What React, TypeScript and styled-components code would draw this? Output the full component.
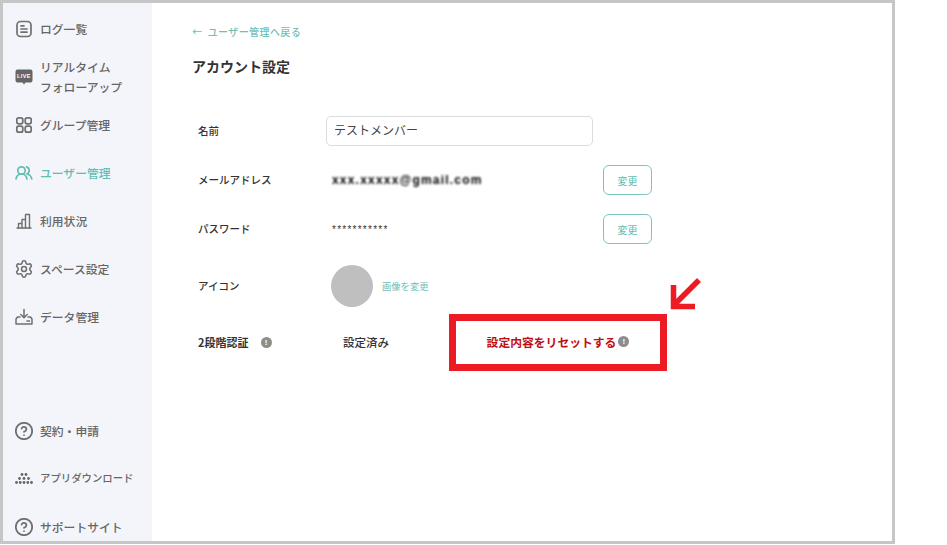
import { FC, ReactNode } from "react";
import styled, { createGlobalStyle } from "styled-components";
import { CircleHelp, Settings } from "lucide-react";

const GlobalStyle = createGlobalStyle`
  html, body {
    margin: 0;
    padding: 0;
    background: #fff;
    font-family: "Noto Sans CJK JP", "Noto Sans", sans-serif;
  }
`;

const LogIcon = () => (
  <svg width="18" height="18" viewBox="0 0 18 18" fill="none" stroke="#6f6f6f" strokeWidth="1.7" strokeLinecap="round">
    <rect x="2" y="1.500" width="14" height="15" rx="3.500" />
    <path d="M6 5.800h3M6 9h6M6 12.200h6" />
  </svg>
);

const LiveIcon = () => (
  <svg width="18" height="18" viewBox="0 0 18 18">
    <path d="M2.500 1.500h13A2 2 0 0 1 17.500 3.500v9a2 2 0 0 1-2 2h-5L9 16.500l-1.500-2h-5a2 2 0 0 1-2-2v-9a2 2 0 0 1 2-2z" fill="#666" />
    <text x="9" y="10" textAnchor="middle" fontSize="5.500" fontWeight="700" letterSpacing="0.400" fill="#fff" fontFamily="Liberation Sans, sans-serif">LIVE</text>
  </svg>
);

const GroupIcon = () => (
  <svg width="18" height="18" viewBox="0 0 18 18" fill="none" stroke="#6f6f6f" strokeWidth="1.700">
    <rect x="1.800" y="1.800" width="6" height="6" rx="2" />
    <rect x="10.200" y="1.800" width="6" height="6" rx="2" />
    <rect x="1.800" y="10.200" width="6" height="6" rx="2" />
    <rect x="10.200" y="10.200" width="6" height="6" rx="2" />
  </svg>
);

const UsersIcon = () => (
  <svg width="18" height="18" viewBox="0 0 18 18" fill="none" stroke="#62bdb2" strokeWidth="1.700" strokeLinecap="round">
    <circle cx="6.500" cy="6.500" r="3.700" />
    <path d="M1 15c.5-3 2.500-5 5.500-5s5 2 5.500 5" />
    <path d="M11.500 2.900a3.700 3.700 0 0 1 0 7.100c2.700.3 4.700 2.100 5.300 5" />
  </svg>
);

const ChartIcon = () => (
  <svg width="18" height="18" viewBox="0 0 18 18" fill="none" stroke="#6f6f6f" strokeWidth="1.400" strokeLinejoin="round" strokeLinecap="round">
    <path d="M2 16h14" />
    <path d="M3.500 16v-4.500h3.500V16M7 16V7.500h3.500V16M10.500 16V2.500h4V16" />
  </svg>
);

const TrayIcon = () => (
  <svg width="18" height="18" viewBox="0 0 18 18" fill="none" stroke="#6f6f6f" strokeWidth="1.500" strokeLinecap="round" strokeLinejoin="round">
    <path d="M9 1.500v8M5.800 6.500 9 9.700l3.200-3.200" />
    <path d="M5 9H2.500L1 11v5h16v-5l-1.500-2H13" />
    <path d="M12 13h2.500" />
  </svg>
);

const HelpIcon = () => (
  <CircleHelp size={18} strokeWidth={2.2} color="#6f6f6f" viewBox="1 1 22 22" />
);

const AppIcon = () => (
  <svg width="18" height="18" viewBox="0 0 18 18" fill="#666">
    <circle cx="7" cy="5.500" r="1.400" />
    <circle cx="11" cy="5.500" r="1.400" />
    <circle cx="4.500" cy="9.500" r="1.400" />
    <circle cx="9" cy="9.500" r="1.400" />
    <circle cx="13.500" cy="9.500" r="1.400" />
    <circle cx="1.500" cy="13.500" r="1.400" />
    <circle cx="5.200" cy="13.500" r="1.400" />
    <circle cx="9" cy="13.500" r="1.400" />
    <circle cx="12.800" cy="13.500" r="1.400" />
    <circle cx="16.500" cy="13.500" r="1.400" />
  </svg>
);

const NoteDot = styled.span`
  width: 11px;
  height: 11px;
  flex: none;
  border-radius: 50%;
  background: #8d8d8d;
  color: #fff;
  font-family: "Liberation Sans", sans-serif;
  font-size: 8px;
  font-weight: 700;
  line-height: 11px;
  text-align: center;
`;

const Frame = styled.div`
  box-sizing: border-box;
  width: 895px;
  height: 544px;
  border: 3px solid #c6c6c6;
  display: flex;
  overflow: hidden;
  background: #fff;
`;

const Sidebar = styled.nav`
  width: 149px;
  flex: none;
  padding-top: 2px;
  background: #f4f5fa;
  display: flex;
  flex-direction: column;
`;

const NavGroup = styled.div<{ $top?: number }>`
  display: flex;
  flex-direction: column;
  flex: none;
  margin-top: ${(p) => p.$top ?? 0}px;
`;

const NavItem = styled.div<{ $active?: boolean; $small?: boolean }>`
  box-sizing: border-box;
  height: 48px;
  flex: none;
  display: flex;
  align-items: center;
  gap: 7px;
  padding: 0 0 ${(p) => (p.$small ? 2 : 0)}px 12px;
  font-size: ${(p) => (p.$small ? 10.4 : 11.8)}px;
  font-weight: 500;
  line-height: 20px;
  color: ${(p) => (p.$active ? "#62bdb2" : "#666")};
  svg {
    flex: none;
  }
`;

const Main = styled.main`
  flex: 1;
  padding: 21px 0 0 40px;
`;

const BackLink = styled.a`
  display: block;
  font-size: 10px;
  line-height: 16px;
  font-weight: 500;
  letter-spacing: 0.4px;
  color: #6fc0b6;
`;

const Title = styled.h1`
  margin: 15px 0 0;
  font-size: 14px;
  line-height: 22px;
  font-weight: 700;
  color: #333;
`;

const Form = styled.div`
  margin-top: 39px;
  display: flex;
  flex-direction: column;
`;

const Row = styled.div<{ $top?: number; $height: number }>`
  display: grid;
  grid-template-columns: 128px 341px;
  align-items: center;
  height: ${(p) => p.$height}px;
  margin-top: ${(p) => p.$top ?? 0}px;
  padding-left: 6px;
`;

const Label = styled.div<{ $strong?: boolean }>`
  display: flex;
  align-items: center;
  gap: 12px;
  padding-bottom: 1px;
  font-size: ${(p) => (p.$strong ? 11 : 10.5)}px;
  font-weight: ${(p) => (p.$strong ? 700 : 500)};
  color: #333;
`;

const Value = styled.div`
  display: flex;
  align-items: center;
  font-size: 11.5px;
  color: #333;
`;

const NameInput = styled.div`
  box-sizing: border-box;
  width: 267px;
  height: 30px;
  display: flex;
  align-items: center;
  padding: 0 0 3px 7px;
  border: 1px solid #dcdcdc;
  border-radius: 5px;
  font-size: 12px;
  color: #444;
`;

const BlurredMail = styled.span`
  margin-left: 6px;
  width: 271px;
  font-family: "Liberation Sans", sans-serif;
  font-size: 12px;
  font-weight: 700;
  letter-spacing: 1.2px;
  color: #000;
  filter: blur(1px);
`;

const Masked = styled.span`
  margin-left: 6px;
  width: 271px;
  font-family: "Liberation Sans", sans-serif;
  font-size: 10px;
  letter-spacing: 1.25px;
  color: #333;
`;

const ChangeButton = styled.button`
  box-sizing: border-box;
  width: 49px;
  height: 30px;
  flex: none;
  padding: 0;
  background: #fff;
  border: 1px solid #7cc6bd;
  border-radius: 6px;
  font-family: inherit;
  font-size: 10px;
  color: #62bdb2;
`;

const Avatar = styled.div`
  width: 42px;
  height: 42px;
  margin-left: 5px;
  border-radius: 50%;
  background: #bfbfbf;
`;

const ImageLink = styled.a`
  margin-left: 9px;
  font-size: 9.300px;
  color: #6fc0b6;
`;

const DoneText = styled.span`
  width: 106px;
  margin-left: 17px;
  padding-bottom: 2px;
  flex: none;
  font-weight: 500;
`;

const Highlight = styled.div`
  position: relative;
  box-sizing: border-box;
  width: 218px;
  height: 57px;
  flex: none;
  border: 7px solid #ed1c24;
  padding-bottom: 2px;
  display: flex;
  align-items: center;
  justify-content: center;
  gap: 2px;
`;

const ResetLink = styled.span`
  font-size: 11.800px;
  font-weight: 700;
  color: #c00d12;
`;

const Arrow = styled.svg`
  position: absolute;
  left: 212px;
  top: -45px;
`;

type NavEntry = { icon: ReactNode; label: ReactNode; active?: boolean; small?: boolean };

const topItems: NavEntry[] = [
  { icon: <LogIcon />, label: "ログ一覧" },
  { icon: <LiveIcon />, label: <>リアルタイム<br />フォローアップ</> },
  { icon: <GroupIcon />, label: "グループ管理" },
  { icon: <UsersIcon />, label: "ユーザー管理", active: true },
  { icon: <ChartIcon />, label: "利用状況" },
  { icon: <Settings size={18} strokeWidth={1.9} color="#6f6f6f" viewBox="1 1 22 22" />, label: "スペース設定" },
  { icon: <TrayIcon />, label: "データ管理" },
];

const bottomItems: NavEntry[] = [
  { icon: <HelpIcon />, label: "契約・申請" },
  { icon: <AppIcon />, label: "アプリダウンロード", small: true },
  { icon: <HelpIcon />, label: "サポートサイト" },
];

const Nav: FC<{ items: NavEntry[]; top?: number }> = ({ items, top }) => (
  <NavGroup $top={top}>
    {items.map((item, i) => (
      <NavItem key={i} $active={item.active} $small={item.small}>
        {item.icon}
        <span>{item.label}</span>
      </NavItem>
    ))}
  </NavGroup>
);

export default function App() {
  return (
    <>
      <GlobalStyle />
      <Frame>
        <Sidebar>
          <Nav items={topItems} />
          <Nav items={bottomItems} top={66} />
        </Sidebar>
        <Main>
          <BackLink>←&nbsp; ユーザー管理へ戻る</BackLink>
          <Title>アカウント設定</Title>
          <Form>
            <Row $height={30}>
              <Label>名前</Label>
              <Value>
                <NameInput>テストメンバー</NameInput>
              </Value>
            </Row>
            <Row $height={30} $top={19}>
              <Label>メールアドレス</Label>
              <Value>
                <BlurredMail>xxx.xxxxx@gmail.com</BlurredMail>
                <ChangeButton>変更</ChangeButton>
              </Value>
            </Row>
            <Row $height={30} $top={19}>
              <Label>パスワード</Label>
              <Value>
                <Masked>***********</Masked>
                <ChangeButton>変更</ChangeButton>
              </Value>
            </Row>
            <Row $height={42} $top={21}>
              <Label>アイコン</Label>
              <Value>
                <Avatar />
                <ImageLink>画像を変更</ImageLink>
              </Value>
            </Row>
            <Row $height={57} $top={7}>
              <Label $strong>
                2段階認証
                <NoteDot>!</NoteDot>
              </Label>
              <Value>
                <DoneText>設定済み</DoneText>
                <Highlight>
                  <ResetLink>設定内容をリセットする</ResetLink>
                  <NoteDot>!</NoteDot>
                  <Arrow width="36" height="36" viewBox="0 0 36 36" fill="none" stroke="#ed1c24" strokeWidth="5.500">
                    <path d="M31 4 6 29" />
                    <path d="M5.500 9v21.500H27" />
                  </Arrow>
                </Highlight>
              </Value>
            </Row>
          </Form>
        </Main>
      </Frame>
    </>
  );
}
